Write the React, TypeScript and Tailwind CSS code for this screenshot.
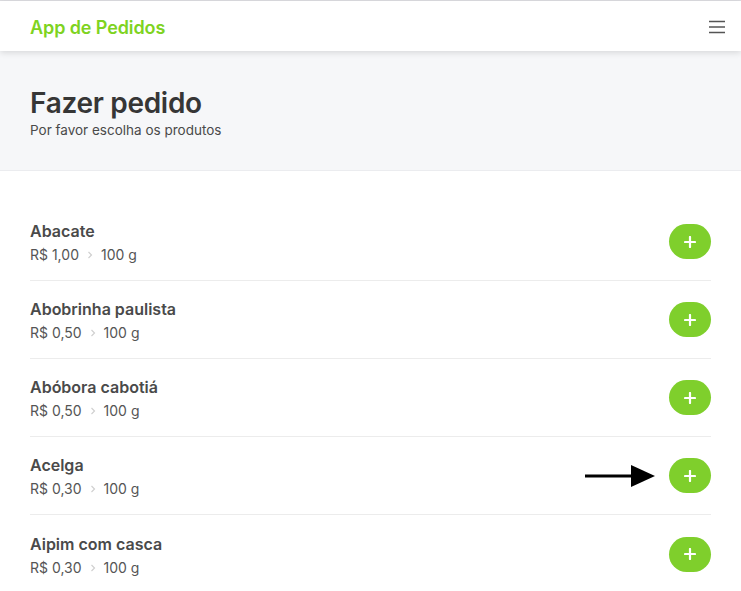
import React from "react";

interface Product {
  name: string;
  price: string;
  unit: string;
}

const products: Product[] = [
  { name: "Abacate", price: "R$ 1,00", unit: "100 g" },
  { name: "Abobrinha paulista", price: "R$ 0,50", unit: "100 g" },
  { name: "Abóbora cabotiá", price: "R$ 0,50", unit: "100 g" },
  { name: "Acelga", price: "R$ 0,30", unit: "100 g" },
  { name: "Aipim com casca", price: "R$ 0,30", unit: "100 g" },
];

const PlusButton = () => (
  <button className="flex h-[35px] w-[42px] items-center justify-center rounded-full bg-[#7fcf2c]">
    <svg width="12" height="12" viewBox="0 0 12 12">
      <path d="M6 1v10M1 6h10" stroke="white" strokeWidth="2.2" strokeLinecap="round" />
    </svg>
  </button>
);

const Arrow = () => (
  <svg width="71" height="24" viewBox="0 0 71 24" className="mr-[13px]">
    <path d="M0 12h48" stroke="black" strokeWidth="3" />
    <path d="M46 1L70 12L46 23Z" fill="black" />
  </svg>
);

export default function App() {
  return (
    <div className="min-h-[591px] bg-white font-['Inter',sans-serif] border-t border-[#dcdce0]">
      <header className="relative z-10 flex h-[50px] items-center justify-between bg-white px-[30px] pt-[2px] shadow-[0_2px_6px_rgba(0,0,0,0.12)]">
        <span className="text-[18px] font-semibold tracking-[-0.1px] text-[#7ed321]">
          App de Pedidos
        </span>
        <svg width="18" height="14" viewBox="0 0 18 14" className="-mr-[15px]">
          <path d="M1 1.5h16M1 7h16M1 12.5h16" stroke="#555" strokeWidth="1.3" />
        </svg>
      </header>

      <section className="h-[120px] border-b border-[#ebecef] bg-[#f6f7f9] px-[30px] pt-[36px]">
        <h1 className="text-[28px] font-semibold leading-[32px] tracking-[-0.3px] text-[#363636]">
          Fazer pedido
        </h1>
        <p className="mt-[3px] text-[13.5px] leading-[16px] text-[#4a4a4a]">
          Por favor escolha os produtos
        </p>
      </section>

      <ul className="mx-[30px] pt-[32px]">
        {products.map((p, i) => (
          <li
            key={p.name}
            className={
              i < products.length - 1
                ? "flex h-[78px] items-center justify-between border-b border-[#ececec]"
                : "flex h-[78px] items-center justify-between"
            }
          >
            <div className="mt-[2px]">
              <div className="text-[16px] font-semibold leading-[22px] text-[#4a4a4a]">{p.name}</div>
              <div className="mt-[3px] flex items-center text-[14px] leading-[20px] text-[#555]">
                <span>{p.price}</span>
                <svg width="6" height="8" viewBox="0 0 6 8" className="mx-[8px]">
                  <path d="M1.5 1l3 3-3 3" stroke="#d0d0d0" strokeWidth="1.2" fill="none" />
                </svg>
                <span>{p.unit}</span>
              </div>
            </div>
            <div className="flex items-center">
              {p.name === "Acelga" && <Arrow />}
              <PlusButton />
            </div>
          </li>
        ))}
      </ul>
    </div>
  );
}
